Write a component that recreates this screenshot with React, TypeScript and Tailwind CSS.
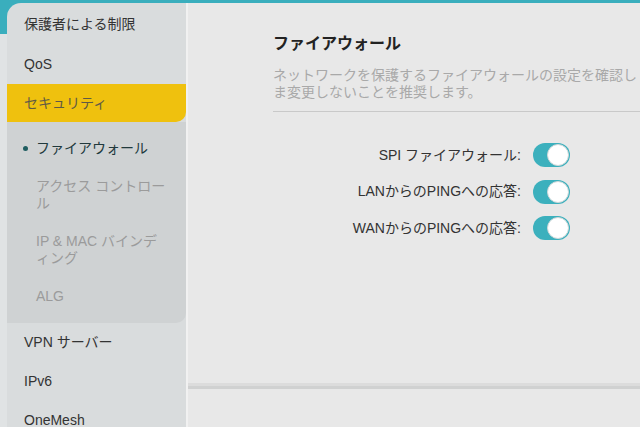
const font = { fontFamily: '"Liberation Sans", "Noto Sans CJK JP", sans-serif' };

const Toggle = () => (
  <div className="relative h-[24px] w-[37px] rounded-full bg-[#3cb0bd]">
    <div className="absolute right-[1px] top-[1px] h-[22px] w-[22px] rounded-full border border-[#cfd8d9] bg-white" />
  </div>
);

export default function App() {
  const rows = ["SPI ファイアウォール:", "LANからのPINGへの応答:", "WANからのPINGへの応答:"];

  return (
    <div className="flex h-[427px] w-[640px] flex-col overflow-hidden bg-[#e8e8e8]" style={font}>
      <div className="h-[3px] shrink-0 bg-[#3aaebd]" />
      <div className="flex flex-1">
        {/* Sidebar */}
        <div className="flex w-[186px] shrink-0 bg-[linear-gradient(to_bottom,#3aaebd_0,#3aaebd_31px,#e0e3e4_31px)] pl-[7px]">
          <div className="flex flex-1 flex-col rounded-tl-[14px] bg-[#d9dcdd] pt-[1px] text-[14px] text-[#333]">
            <div className="flex h-[40px] items-center pl-[17px]">保護者による制限</div>
            <div className="flex h-[40px] items-center pl-[17px]">QoS</div>
            <div className="flex h-[38px] items-center rounded-br-[10px] bg-[#efc10e] pl-[17px] text-[#5f5a45]">
              セキュリティ
            </div>
            <div className="flex flex-col gap-[21px] rounded-br-[10px] bg-[#cfd2d3] py-[18px] pl-[29px] leading-[17px] text-[#9b9b9b]">
              <div className="-ml-[13px] flex items-center text-[#21393c]">
                <span className="mr-[8px] h-[5px] w-[5px] rounded-full bg-[#1f5d60]" />
                ファイアウォール
              </div>
              <div>
                アクセス コントロー
                <br />ル
              </div>
              <div>
                IP &amp; MAC バインデ
                <br />
                ィング
              </div>
              <div>ALG</div>
            </div>
            <div className="flex h-[39px] items-center pl-[17px]">VPN サーバー</div>
            <div className="flex h-[39px] items-center pl-[17px]">IPv6</div>
            <div className="flex h-[39px] items-center pl-[17px]">OneMesh</div>
          </div>
        </div>

        {/* Main */}
        <div className="flex flex-1 flex-col border-l-2 border-[#f1f1f1]">
          <div className="h-[380px] shrink-0 pl-[85px] pt-[29px]">
            <div className="text-[16px] font-bold leading-[24px] text-[#222]">ファイアウォール</div>
            <div className="mt-[11px] whitespace-nowrap text-[14px] leading-[17px] text-[#a9a9a9]">
              <div>ネットワークを保護するファイアウォールの設定を確認し</div>
              <div>ま変更しないことを推奨します。</div>
            </div>
            <div className="mt-[10px] h-px bg-[#c9c9c9]" />
            <div className="mt-[25px] flex flex-col">
              {rows.map((r) => (
                <div key={r} className="flex h-[36.5px] items-center">
                  <div className="w-[248px] text-right text-[14px] text-[#333]">{r}</div>
                  <div className="ml-[12px]">
                    <Toggle />
                  </div>
                </div>
              ))}
            </div>
          </div>
          <div className="h-[3px] bg-[#dcdcdc]" />
          <div className="h-[3px] bg-[#d0d1d1]" />
          <div className="flex-1 bg-[#e8e8e8]" />
        </div>
      </div>
    </div>
  );
}
